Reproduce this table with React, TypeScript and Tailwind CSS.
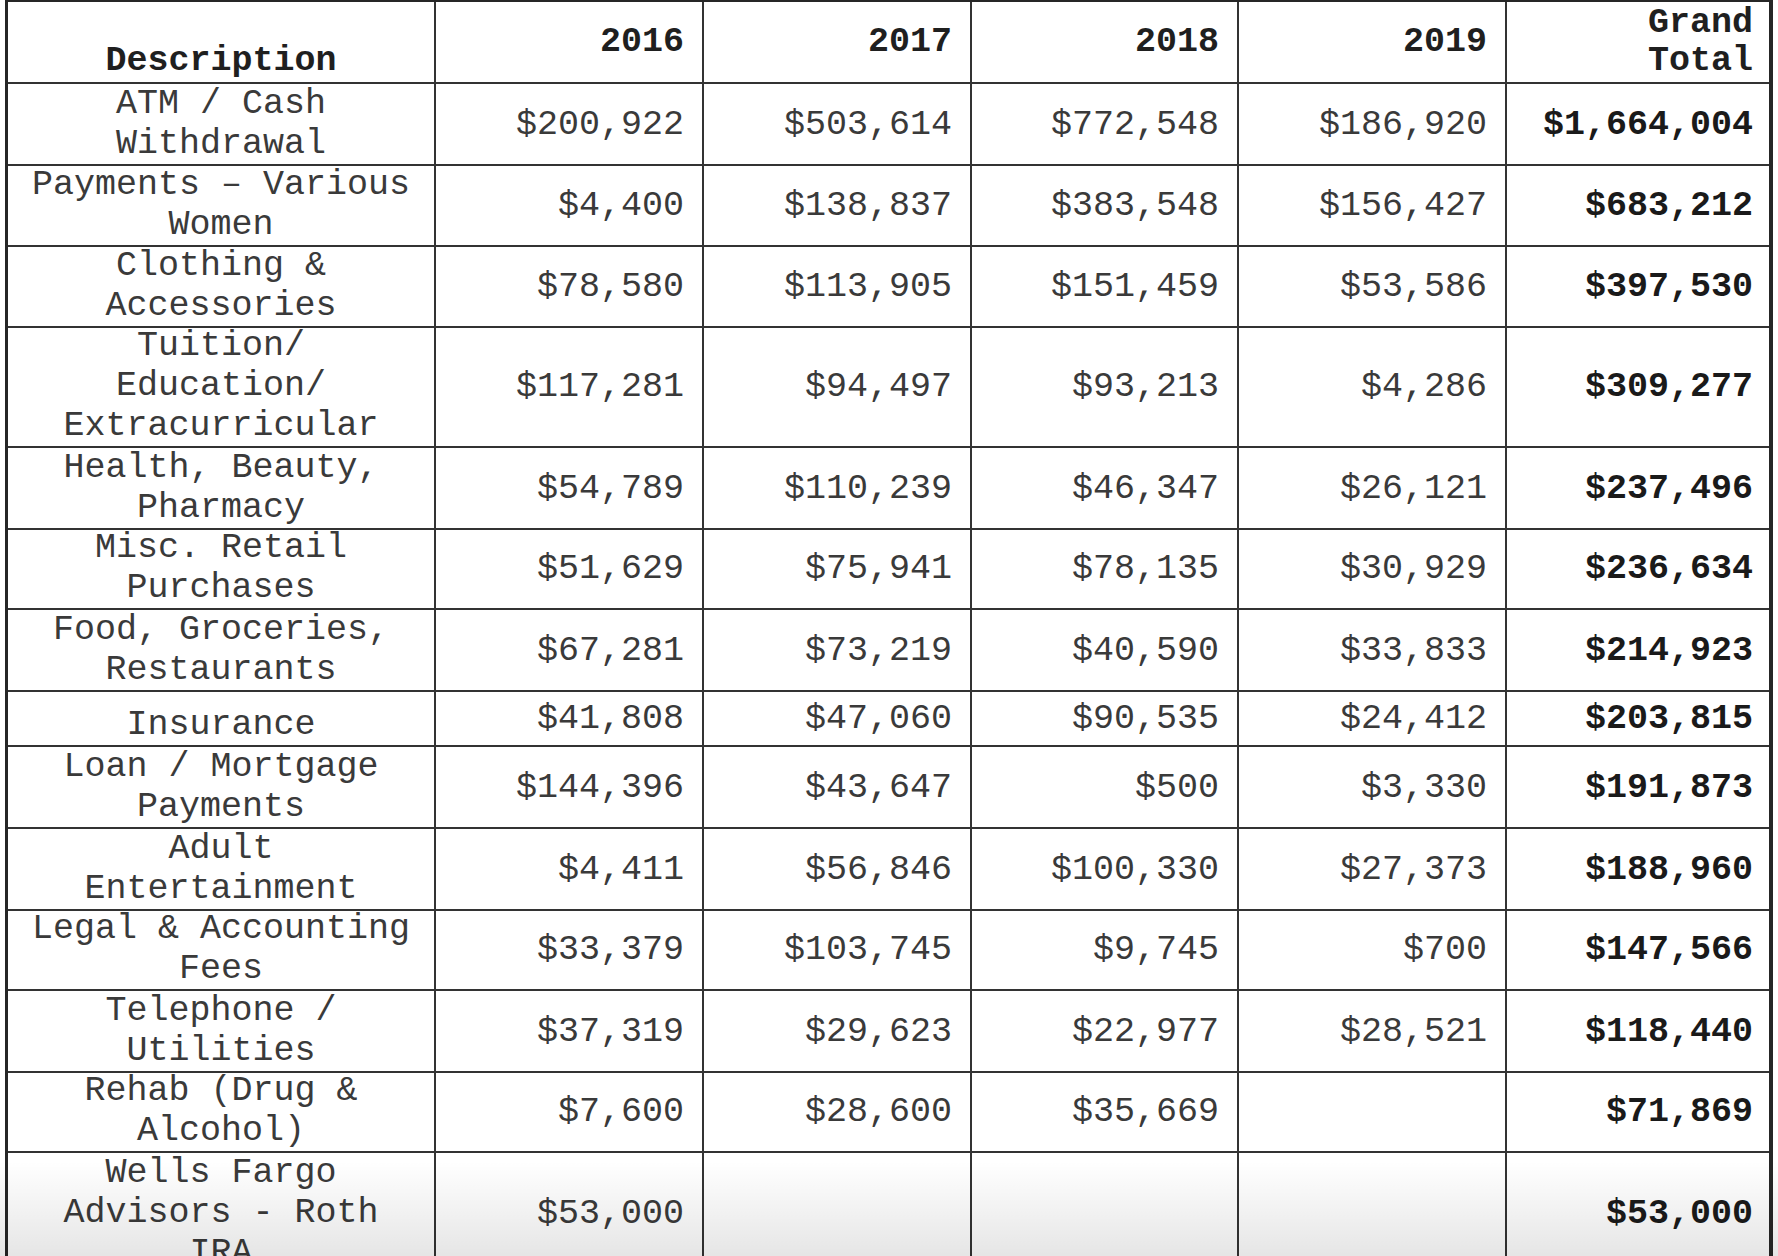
import React from 'react';

type Row = {
  desc: string[];
  values: string[];
  total: string;
  height: string;
};

const ROWS: Row[] = [
  { desc: ['ATM / Cash', 'Withdrawal'], values: ['$200,922', '$503,614', '$772,548', '$186,920'], total: '$1,664,004', height: 'h-[81px]' },
  { desc: ['Payments – Various', 'Women'], values: ['$4,400', '$138,837', '$383,548', '$156,427'], total: '$683,212', height: 'h-[81px]' },
  { desc: ['Clothing &', 'Accessories'], values: ['$78,580', '$113,905', '$151,459', '$53,586'], total: '$397,530', height: 'h-[80px]' },
  { desc: ['Tuition/', 'Education/', 'Extracurricular'], values: ['$117,281', '$94,497', '$93,213', '$4,286'], total: '$309,277', height: 'h-[122px]' },
  { desc: ['Health, Beauty,', 'Pharmacy'], values: ['$54,789', '$110,239', '$46,347', '$26,121'], total: '$237,496', height: 'h-[80px]' },
  { desc: ['Misc. Retail', 'Purchases'], values: ['$51,629', '$75,941', '$78,135', '$30,929'], total: '$236,634', height: 'h-[82px]' },
  { desc: ['Food, Groceries,', 'Restaurants'], values: ['$67,281', '$73,219', '$40,590', '$33,833'], total: '$214,923', height: 'h-[80px]' },
  { desc: ['Insurance'], values: ['$41,808', '$47,060', '$90,535', '$24,412'], total: '$203,815', height: 'h-[57px]' },
  { desc: ['Loan / Mortgage', 'Payments'], values: ['$144,396', '$43,647', '$500', '$3,330'], total: '$191,873', height: 'h-[82px]' },
  { desc: ['Adult', 'Entertainment'], values: ['$4,411', '$56,846', '$100,330', '$27,373'], total: '$188,960', height: 'h-[80px]' },
  { desc: ['Legal & Accounting', 'Fees'], values: ['$33,379', '$103,745', '$9,745', '$700'], total: '$147,566', height: 'h-[82px]' },
  { desc: ['Telephone /', 'Utilities'], values: ['$37,319', '$29,623', '$22,977', '$28,521'], total: '$118,440', height: 'h-[80px]' },
  { desc: ['Rehab (Drug &', 'Alcohol)'], values: ['$7,600', '$28,600', '$35,669', ''], total: '$71,869', height: 'h-[82px]' },
  { desc: ['Wells Fargo', 'Advisors - Roth', 'IRA'], values: ['$53,000', '', '', ''], total: '$53,000', height: 'h-[122px]' },
];

const YEARS = ['2016', '2017', '2018', '2019'];

export default function App() {
  return (
    <div
      className="relative h-[1256px] w-[1778px] overflow-hidden bg-white text-[#3a3a3a]"
      style={{ fontFamily: '"Liberation Mono", "DejaVu Sans Mono", monospace' }}
    >
      <div className="ml-[5px] w-[1768px] border-t-2 border-l-[3px] border-r-[4px] border-[#262626] text-[35px] leading-[40px]">
        {/* header */}
        <div className="grid h-[82px] grid-cols-[428px_268px_268px_267px_268px_1fr] text-[#1f1f1f]">
          <div className="flex items-end justify-center border-r-2 border-b-2 border-[#333] pb-[1px] font-bold">
            Description
          </div>
          {YEARS.map((y) => (
            <div
              key={y}
              className="flex items-center justify-end border-r-2 border-b-2 border-[#333] pr-[18px] font-bold"
            >
              {y}
            </div>
          ))}
          <div className="flex flex-col items-end justify-center border-b-2 border-[#333] pr-[16px] font-bold leading-[38px]">
            <span>Grand</span>
            <span>Total</span>
          </div>
        </div>

        {/* rows */}
        {ROWS.map((row) => (
          <div
            key={row.desc.join(' ')}
            className={`grid grid-cols-[428px_268px_268px_267px_268px_1fr] ${row.height}`}
          >
            <div className="flex flex-col items-center justify-end border-r-2 border-b-2 border-[#333] text-center whitespace-pre">
              {row.desc.map((line) => (
                <span key={line}>{line}</span>
              ))}
            </div>
            {row.values.map((v, i) => (
              <div
                key={i}
                className="flex items-center justify-end border-r-2 border-b-2 border-[#333] pt-[2px] pr-[18px]"
              >
                {v}
              </div>
            ))}
            <div className="flex items-center justify-end border-b-2 border-[#333] pt-[2px] pr-[16px] font-bold text-[#1a1a1a]">
              {row.total}
            </div>
          </div>
        ))}
      </div>

      {/* bottom fade from the screenshot */}
      <div className="pointer-events-none absolute inset-x-0 bottom-0 h-[95px] bg-gradient-to-b from-transparent to-black/[0.1]" />
    </div>
  );
}
